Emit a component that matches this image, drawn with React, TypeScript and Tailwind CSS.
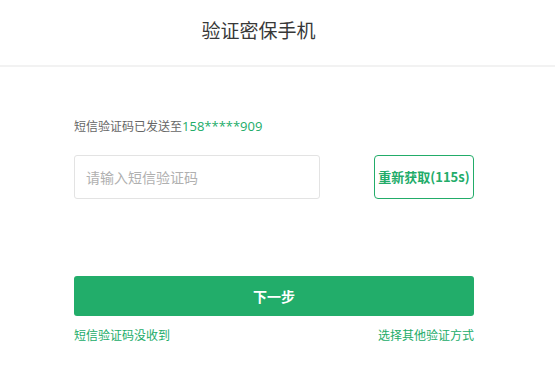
import React from "react";

export default function App() {
  return (
    <div className="w-[555px] h-[368px] bg-white overflow-hidden" style={{ fontFamily: '"Noto Sans CJK SC", "Microsoft YaHei", sans-serif' }}>
      <div className="h-[67px] border-b-2 border-[#f2f2f2] flex items-center justify-center pr-[38px] pb-[5px]">
        <h1 className="text-[19px] leading-[26px] text-[#383838] font-normal">验证密保手机</h1>
      </div>
      <div className="w-[400px] ml-[74px] pt-[50px]">
        <div className="text-[12px] leading-[18px] text-[#666666]">
          短信验证码已发送至<span className="text-[#22ac69] text-[13px]" style={{ fontFamily: '"Open Sans", "Noto Sans", sans-serif' }}>158*****909</span>
        </div>
        <div className="mt-[20px] flex justify-between">
          <input
            className="w-[246px] h-[44px] border border-[#e3e3e3] rounded-[3px] px-[11px] text-[14px] text-[#333] placeholder:text-[#b0b0b0] outline-none"
            placeholder="请输入短信验证码"
          />
          <button className="w-[100px] h-[44px] border border-[#22ac69] rounded-[4px] text-[13px] font-bold text-[#22ac69] flex items-center justify-center">
            重新获取(115s)
          </button>
        </div>
        <button className="mt-[77px] w-[400px] h-[40px] bg-[#22ad6a] rounded-[3px] text-white text-[14px] font-bold flex items-center justify-center">
          下一步
        </button>
        <div className="mt-[10px] flex justify-between text-[12px] leading-[18px] text-[#22ac69]">
          <span>短信验证码没收到</span>
          <span>选择其他验证方式</span>
        </div>
      </div>
    </div>
  );
}
